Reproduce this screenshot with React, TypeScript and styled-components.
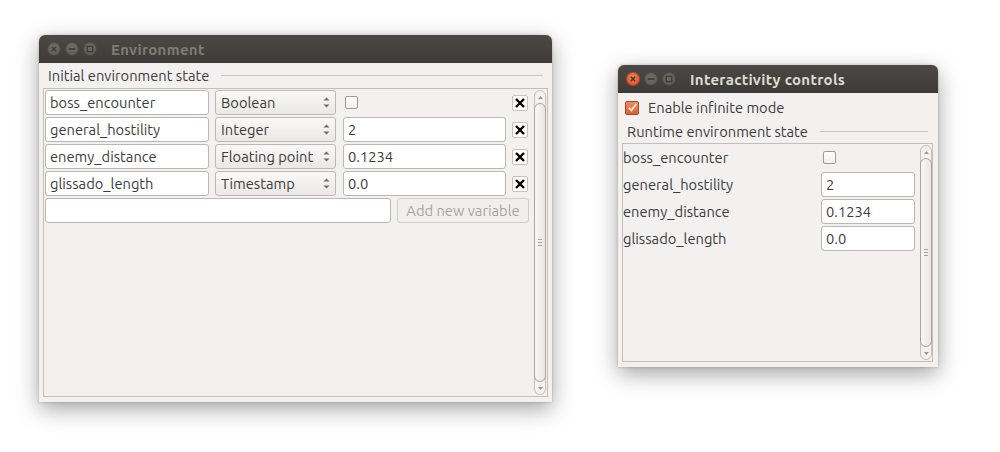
import React from "react";
import styled, { createGlobalStyle } from "styled-components";

interface VarType {
    name: string,
    type: string,
    value: string,
    isBool?: boolean,
}

const vars: VarType[] = [
    { name: "boss_encounter", type: "Boolean", value: "", isBool: true },
    { name: "general_hostility", type: "Integer", value: "2" },
    { name: "enemy_distance", type: "Floating point", value: "0.1234" },
    { name: "glissado_length", type: "Timestamp", value: "0.0" },
];

const GlobalStyle = createGlobalStyle`
    html, body {
        margin: 0;
        padding: 0;
        background: #ffffff;
    }
    body {
        font-family: "Ubuntu", "Open Sans", "Noto Sans", sans-serif;
        font-size: 14.7px;
        color: #3c3c3c;
    }
`;

const WinButtons: React.FC<{ active?: boolean }> = ({ active }) => (
    <Buttons>
        <CircleBtn kind={active ? "close" : "idle"}>
            <svg width="14" height="14" viewBox="0 0 14 14">
                <path d="M4.8 4.8 L9.2 9.2 M9.2 4.8 L4.8 9.2" stroke={active ? "#3c3b37" : "#3f3e3a"} strokeWidth="1.4" />
            </svg>
        </CircleBtn>
        <CircleBtn kind="idle">
            <svg width="14" height="14" viewBox="0 0 14 14">
                <path d="M3.8 7 L10.2 7" stroke="#3c3b37" strokeWidth="1.6" />
            </svg>
        </CircleBtn>
        <CircleBtn kind="idle">
            <svg width="14" height="14" viewBox="0 0 14 14">
                <rect x="4.3" y="4.3" width="5.4" height="5.4" fill="none" stroke="#3c3b37" strokeWidth="1.3" />
            </svg>
        </CircleBtn>
    </Buttons>
);

const Scroll: React.FC = () => (
    <ScrollTrack>
        <ArrowCap>
            <svg width="7" height="5" viewBox="0 0 7 5"><path d="M1 4 L3.5 1 L6 4 Z" fill="#9c9994" /></svg>
        </ArrowCap>
        <Thumb>
            <Grip><span /><span /><span /></Grip>
        </Thumb>
        <ArrowCap>
            <svg width="7" height="5" viewBox="0 0 7 5"><path d="M1 1 L3.5 4 L6 1 Z" fill="#9c9994" /></svg>
        </ArrowCap>
    </ScrollTrack>
);

const RemoveIcon: React.FC = () => (
    <RemoveBtn>
        <svg width="12" height="12" viewBox="0 0 12 12">
            <path d="M2 2 L10 10 M10 2 L2 10" stroke="#000" strokeWidth="2.4" />
        </svg>
    </RemoveBtn>
);

const App: React.FC = () => {
    return (
        <Desktop>
            <GlobalStyle />

            <Window left={39} top={35} width={513} height={367}>
                <TitleBar>
                    <WinButtons />
                    <Title active={false}>Environment</Title>
                </TitleBar>
                <Body pad="0 4px 5px">
                    <GroupHeader indent={5} height={25}>
                        <span>Initial environment state</span>
                        <Rule />
                    </GroupHeader>
                    <Frame>
                        <FrameContent inset={1}>
                            <Rows>
                                {vars.map((v) => (
                                    <EditRow key={v.name}>
                                        <TextBox width={164}>{v.name}</TextBox>
                                        <Combo>
                                            <span>{v.type}</span>
                                            <ComboArrows>
                                                <svg width="7" height="4" viewBox="0 0 7 4"><path d="M0.5 3.5 L3.5 0.5 L6.5 3.5 Z" fill="#6f6d68" /></svg>
                                                <svg width="7" height="4" viewBox="0 0 7 4"><path d="M0.5 0.5 L3.5 3.5 L6.5 0.5 Z" fill="#6f6d68" /></svg>
                                            </ComboArrows>
                                        </Combo>
                                        {v.isBool ? (
                                            <BoolCell width={163}><CheckBox /></BoolCell>
                                        ) : (
                                            <TextBox width={163}>{v.value}</TextBox>
                                        )}
                                        <RemoveIcon />
                                    </EditRow>
                                ))}
                                <EditRow>
                                    <TextBox width={346}></TextBox>
                                    <AddButton>Add new variable</AddButton>
                                </EditRow>
                            </Rows>
                            <Scroll />
                        </FrameContent>
                    </Frame>
                </Body>
            </Window>

            <Window left={618} top={65} width={320} height={302}>
                <TitleBar>
                    <WinButtons active />
                    <Title active>Interactivity controls</Title>
                </TitleBar>
                <Body pad="0 5px 5px 4px">
                    <ToggleRow>
                        <CheckedBox>
                            <svg width="11" height="11" viewBox="0 0 11 11">
                                <path d="M1.8 5.6 L4.4 8.3 L9.4 1.8" fill="none" stroke="#fbe6dc" strokeWidth="1.9" />
                            </svg>
                        </CheckedBox>
                        <span>Enable infinite mode</span>
                    </ToggleRow>
                    <GroupHeader indent={5} height={24}>
                        <span>Runtime environment state</span>
                        <Rule />
                    </GroupHeader>
                    <Frame>
                        <FrameContent inset={0}>
                            <Rows>
                                {vars.map((v) => (
                                    <StateRow key={v.name}>
                                        <StateLabel>{v.name}</StateLabel>
                                        {v.isBool ? (
                                            <BoolCell width={94}><CheckBox /></BoolCell>
                                        ) : (
                                            <TextBox width={94}>{v.value}</TextBox>
                                        )}
                                    </StateRow>
                                ))}
                            </Rows>
                            <Scroll />
                        </FrameContent>
                    </Frame>
                </Body>
            </Window>
        </Desktop>
    );
};

const Desktop = styled.div`
    position: relative;
    width: 1000px;
    height: 452px;
    overflow: hidden;
    background: #ffffff;
`;
const Window = styled.div<{ left: number, top: number, width: number, height: number }>`
    position: absolute;
    left: ${({ left }) => left}px;
    top: ${({ top }) => top}px;
    width: ${({ width }) => width}px;
    height: ${({ height }) => height}px;
    display: flex;
    flex-direction: column;
    background: #f2f1f0;
    border-radius: 6px 6px 0 0;
    box-shadow: 0 7px 22px rgba(0, 0, 0, 0.36), 0 0 3px rgba(0, 0, 0, 0.22);
`;
const TitleBar = styled.div`
    height: 28px;
    flex-shrink: 0;
    display: flex;
    align-items: center;
    padding-left: 8px;
    border-radius: 6px 6px 0 0;
    background: linear-gradient(#4a4945, #3c3b37);
`;
const Buttons = styled.div`
    display: flex;
    gap: 4px;
`;
const CircleBtn = styled.div<{ kind: "close" | "idle" }>`
    width: 14px;
    height: 14px;
    border-radius: 50%;
    display: flex;
    align-items: center;
    justify-content: center;
    background: ${({ kind }) => (kind === "close"
        ? "radial-gradient(circle at 50% 35%, #f47d52, #dd4b20)"
        : "radial-gradient(circle at 50% 35%, #6e6d68, #58574f)")};
    box-shadow: inset 0 0 0 1px rgba(0, 0, 0, 0.25);
`;
const Title = styled.div<{ active: boolean }>`
    margin-left: 14px;
    font-weight: bold;
    font-size: 15px;
    letter-spacing: 0.3px;
    color: ${({ active }) => (active ? "#dfdbd2" : "#7f7c76")};
`;
const Body = styled.div<{ pad: string }>`
    flex: 1;
    display: flex;
    flex-direction: column;
    padding: ${({ pad }) => pad};
    min-height: 0;
`;
const GroupHeader = styled.div<{ indent: number, height: number }>`
    height: ${({ height }) => height}px;
    flex-shrink: 0;
    display: flex;
    align-items: center;
    gap: 12px;
    padding-left: ${({ indent }) => indent}px;
    padding-right: 5px;
`;
const Rule = styled.div`
    flex: 1;
    height: 1px;
    background: #c9c6c1;
`;
const Frame = styled.div`
    flex: 1;
    border: 1px solid #c2bfba;
    min-height: 0;
    display: flex;
`;
const FrameContent = styled.div<{ inset: number }>`
    flex: 1;
    display: flex;
    padding: 1px 1px 1px ${({ inset }) => inset}px;
`;
const Rows = styled.div`
    flex: 1;
    display: flex;
    flex-direction: column;
    gap: 2px;
`;
const EditRow = styled.div`
    display: flex;
    align-items: center;
    height: 25px;
    gap: 6px;
`;
const TextBox = styled.div<{ width: number }>`
    box-sizing: border-box;
    width: ${({ width }) => width}px;
    height: 25px;
    flex-shrink: 0;
    display: flex;
    align-items: center;
    padding-left: 4px;
    background: #ffffff;
    border: 1px solid #bbb8b3;
    border-radius: 3px;
    color: #3c3c3c;
    white-space: nowrap;
`;
const BoolCell = styled.div<{ width: number }>`
    width: ${({ width }) => width}px;
    height: 25px;
    flex-shrink: 0;
    display: flex;
    align-items: center;
    padding-left: 2px;
    box-sizing: border-box;
`;
const Combo = styled.div`
    box-sizing: border-box;
    width: 121px;
    height: 25px;
    flex-shrink: 0;
    display: flex;
    align-items: center;
    justify-content: space-between;
    padding: 0 5px 0 5px;
    margin-right: 1px;
    border: 1px solid #bdbab5;
    border-radius: 3px;
    background: linear-gradient(#faf9f8, #eae8e5);
    white-space: nowrap;
`;
const ComboArrows = styled.div`
    display: flex;
    flex-direction: column;
    gap: 3px;
`;
const CheckBox = styled.div`
    box-sizing: border-box;
    width: 13px;
    height: 13px;
    border: 1px solid #9f9c97;
    border-radius: 2px;
    background: linear-gradient(#ffffff, #f1f0ee);
`;
const RemoveBtn = styled.div`
    box-sizing: border-box;
    width: 16px;
    height: 16px;
    flex-shrink: 0;
    display: flex;
    align-items: center;
    justify-content: center;
    background: #ffffff;
    border: 1px solid #c6c3be;
    border-radius: 2px;
`;
const AddButton = styled.div`
    box-sizing: border-box;
    width: 132px;
    height: 25px;
    display: flex;
    align-items: center;
    justify-content: center;
    border: 1px solid #d2cfca;
    border-radius: 3px;
    background: #f0efed;
    color: #a7a5a1;
    white-space: nowrap;
`;
const ScrollTrack = styled.div`
    box-sizing: border-box;
    width: 12px;
    margin-left: 5px;
    display: flex;
    flex-direction: column;
    border: 1px solid #c4c1bc;
    border-radius: 6px;
    background: #f3f2f1;
`;
const ArrowCap = styled.div`
    height: 12px;
    flex-shrink: 0;
    display: flex;
    align-items: center;
    justify-content: center;
`;
const Thumb = styled.div`
    flex: 1;
    margin: 0 -1px;
    border: 1px solid #a8a5a0;
    border-radius: 6px;
    background: linear-gradient(90deg, #f9f8f7, #e8e6e3);
    display: flex;
    align-items: center;
    justify-content: center;
`;
const Grip = styled.div`
    display: flex;
    flex-direction: column;
    gap: 2px;
    span {
        display: block;
        width: 4px;
        height: 1px;
        background: #a6a39e;
    }
`;
const ToggleRow = styled.div`
    height: 26px;
    flex-shrink: 0;
    display: flex;
    align-items: center;
    gap: 9px;
    padding-left: 3px;
    padding-top: 3px;
    box-sizing: border-box;
`;
const CheckedBox = styled.div`
    box-sizing: border-box;
    width: 14px;
    height: 14px;
    display: flex;
    align-items: center;
    justify-content: center;
    border: 1px solid #a94a22;
    border-radius: 2px;
    background: linear-gradient(#f18a5e, #dd5f2d);
`;
const StateRow = styled.div`
    display: flex;
    align-items: center;
    height: 25px;
`;
const StateLabel = styled.div`
    width: 198px;
    flex-shrink: 0;
`;

export default App;
